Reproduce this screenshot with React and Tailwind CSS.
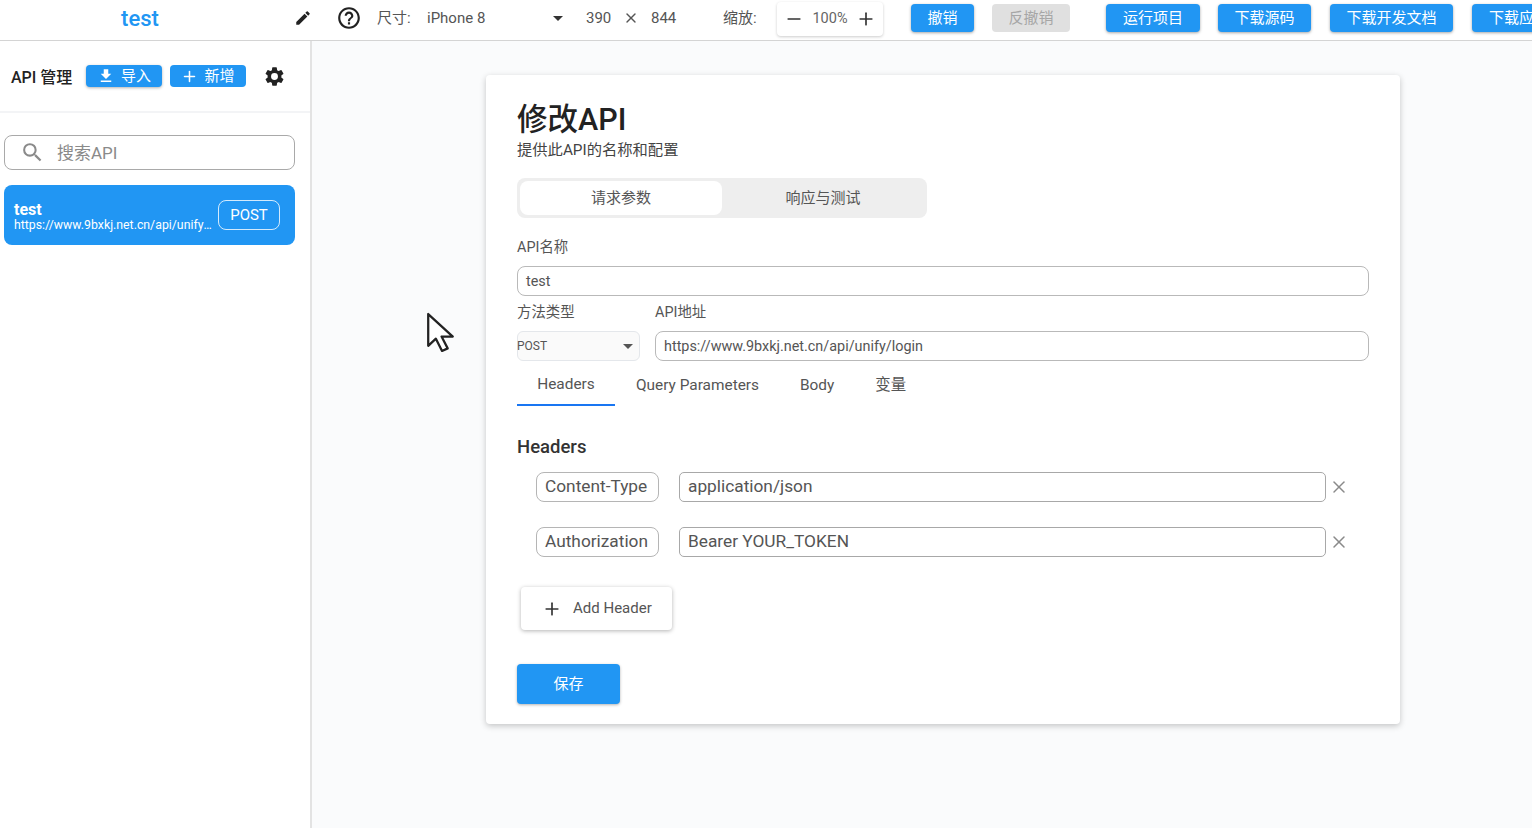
import { Plus, Minus, X } from 'lucide-react';

const font = 'font-["Roboto","Noto_Sans_CJK_SC",sans-serif]';
const headerBtn = 'h-7 rounded bg-[#2196f3] text-white text-[15px] shrink-0 shadow-[0_1px_3px_rgba(0,0,0,0.35)] flex items-center justify-center';

function MaterialIcon({ d, className }) {
  return (
    <svg viewBox="0 0 24 24" className={className} fill="currentColor">
      <path d={d} />
    </svg>
  );
}

const gearPath = 'M19.14 12.94c.04-.3.06-.61.06-.94s-.02-.64-.07-.94l2.03-1.58a.49.49 0 0 0 .12-.61l-1.92-3.32a.49.49 0 0 0-.59-.22l-2.39.96a7 7 0 0 0-1.62-.94l-.36-2.54a.48.48 0 0 0-.48-.41h-3.84a.48.48 0 0 0-.47.41l-.36 2.54c-.59.24-1.13.57-1.62.94l-2.39-.96a.48.48 0 0 0-.59.22L2.74 8.87a.48.48 0 0 0 .12.61l2.03 1.58c-.05.3-.09.63-.09.94s.02.64.07.94l-2.03 1.58a.49.49 0 0 0-.12.61l1.92 3.32c.12.22.37.29.59.22l2.39-.96c.5.38 1.03.7 1.62.94l.36 2.54c.05.24.24.41.48.41h3.84c.24 0 .44-.17.47-.41l.36-2.54c.59-.24 1.13-.56 1.62-.94l2.39.96c.22.08.47 0 .59-.22l1.92-3.32a.48.48 0 0 0-.12-.61l-2.01-1.58zM12 15.6a3.6 3.6 0 1 1 0-7.2 3.6 3.6 0 0 1 0 7.2z';
const editPath = 'M3 17.25V21h3.75L17.81 9.94l-3.75-3.75L3 17.25zM20.71 7.04a1 1 0 0 0 0-1.41l-2.34-2.34a1 1 0 0 0-1.41 0l-1.83 1.83 3.75 3.75 1.83-1.83z';
const helpPath = 'M11 18h2v-2h-2v2zm1-16C6.48 2 2 6.48 2 12s4.48 10 10 10 10-4.48 10-10S17.52 2 12 2zm0 18c-4.41 0-8-3.59-8-8s3.59-8 8-8 8 3.59 8 8-3.59 8-8 8zm0-14c-2.21 0-4 1.79-4 4h2c0-1.1.9-2 2-2s2 .9 2 2c0 2-3 1.75-3 5h2c0-2.25 3-2.5 3-5 0-2.21-1.79-4-4-4z';
const downloadPath = 'M19 9h-4V3H9v6H5l7 7 7-7zM5 18v2h14v-2H5z';
const searchPath = 'M15.5 14h-.79l-.28-.27A6.47 6.47 0 0 0 16 9.5 6.5 6.5 0 1 0 9.5 16c1.61 0 3.09-.59 4.23-1.57l.27.28v.79l5 4.99L20.49 19l-4.99-5zm-6 0C7.01 14 5 11.99 5 9.5S7.01 5 9.5 5 14 7.01 14 9.5 11.99 14 9.5 14z';

function Header() {
  return (
    <div className="h-[41px] shrink-0 flex items-center border-b border-[#d4d4d4] bg-white overflow-hidden pb-[4px] text-[#555]">
      <div className="w-[280px] shrink-0 text-center text-[22px] font-medium text-[#2196f3]">test</div>
      <MaterialIcon d={editPath} className="w-[18px] h-[18px] ml-[14px] shrink-0 text-[#222]" />
      <MaterialIcon d={helpPath} className="w-[26px] h-[26px] ml-[24px] shrink-0 text-[#222]" />
      <span className="ml-[15px] text-[15px] w-[50px] shrink-0">尺寸:</span>
      <span className="text-[15px] w-[126px] shrink-0">iPhone 8</span>
      <span className="w-0 h-0 border-x-[5px] border-x-transparent border-t-[5px] border-t-[#333] shrink-0 mt-[1px]" />
      <span className="ml-[23px] text-[15px] shrink-0 w-[38px]">390</span>
      <X className="w-[16px] h-[16px] shrink-0 -ml-[1px]" />
      <span className="ml-[12px] text-[15px] shrink-0 w-[72px]">844</span>
      <span className="text-[15px] shrink-0 w-[54px]">缩放:</span>
      <div className="w-[106px] h-[34px] shrink-0 mt-[1px] rounded shadow-[0_1px_3px_rgba(0,0,0,0.2)] bg-white flex items-center justify-center gap-[8px] text-[14.5px]">
        <Minus className="w-[20px] h-[20px] text-[#333]" />
        <span className="text-[#666]">100%</span>
        <Plus className="w-[20px] h-[20px] text-[#333]" />
      </div>
      <button className={`${headerBtn} ml-[28px] w-[63px]`}>撤销</button>
      <button className="h-7 rounded bg-[#e0e0e0] text-[#a6a6a6] text-[15px] shrink-0 ml-[18px] w-[78px]">反撤销</button>
      <button className={`${headerBtn} ml-[36px] w-[94px]`}>运行项目</button>
      <button className={`${headerBtn} ml-[18px] w-[93px]`}>下载源码</button>
      <button className={`${headerBtn} ml-[19px] w-[123px]`}>下载开发文档</button>
      <button className={`${headerBtn} ml-[19px] w-[94px]`}>下载应用</button>
    </div>
  );
}

function Sidebar() {
  return (
    <div className="w-[312px] shrink-0 border-r-2 border-[#e3e3e3] bg-white">
      <div className="h-[72px] flex items-center pl-[11px] border-b-2 border-[#f3f4f6]">
        <span className="text-base font-medium text-[#222] w-[75px] shrink-0 mt-[4px]">API 管理</span>
        <button className="w-[76px] h-[22px] rounded bg-[#2196f3] text-white text-[15px] flex items-center justify-center gap-[6px] shadow-[0_1px_3px_rgba(0,0,0,0.3)]">
          <MaterialIcon d={downloadPath} className="w-[18px] h-[18px]" />
          <span className="mt-[1px]">导入</span>
        </button>
        <button className="ml-2 w-[76px] h-[22px] rounded bg-[#2196f3] text-white text-[15px] flex items-center justify-center gap-[6px]">
          <Plus className="w-[17px] h-[17px]" strokeWidth={2.2} />
          <span className="mt-[1px]">新增</span>
        </button>
        <MaterialIcon d={gearPath} className="ml-[17px] w-[23px] h-[23px] text-[#222]" />
      </div>
      <div className="px-1 pt-[22px]">
        <div className="h-[35px] w-[291px] rounded-lg border border-[#a9a9a9] flex items-center pl-[15px] gap-[12px]">
          <MaterialIcon d={searchPath} className="w-[25px] h-[25px] text-[#8a8a8a]" />
          <span className="text-[17px] text-[#8a8a8a] mt-[3px]">搜索API</span>
        </div>
        <div className="mt-[15px] h-[60px] w-[291px] rounded-lg bg-[#2196f3] text-white flex items-center pl-[10px]">
          <div className="w-[200px] min-w-0 mt-[2px]">
            <div className="text-base leading-[17px] font-bold">test</div>
            <div className="text-[12.3px] leading-[14px] truncate">https://www.9bxkj.net.cn/api/unify/login</div>
          </div>
          <span className="ml-[4px] w-[62px] h-[30px] rounded-lg border border-white/80 flex items-center justify-center text-[15px]">POST</span>
        </div>
      </div>
    </div>
  );
}

function HeaderRow({ name, value, className }) {
  return (
    <div className={`flex items-center pl-[19px] ${className}`}>
      <div className="w-[123px] h-[30px] shrink-0 rounded-lg border border-[#b5b5b5] flex items-center pl-[8px] pb-[1px] text-[17.3px] text-[#555]">{name}</div>
      <div className="ml-[20px] flex-1 h-[30px] rounded-[5px] border border-[#a8a8a8] flex items-center pl-[8px] pb-[1px] text-[17.3px] text-[#555]">{value}</div>
      <X className="ml-[3px] mr-[20px] w-[20px] h-[20px] text-[#8a8a8a]" strokeWidth={1.8} />
    </div>
  );
}

function ApiCard() {
  return (
    <div className="w-[914px] h-[649px] mt-[34px] ml-[174px] shrink-0 rounded bg-white shadow-[0_2px_6px_rgba(0,0,0,0.22)] pl-[31px] pr-[31px] pt-[25px]">
      <h1 className="text-[30.5px] leading-[40px] font-medium text-[#222]">修改API</h1>
      <p className="text-[15.3px] leading-5 text-[#444]">提供此API的名称和配置</p>

      <div className="mt-[18px] w-[410px] h-[40px] rounded-lg bg-[#eeeeee] flex p-[3px] text-[15px] text-[#555]">
        <div className="w-[202px] rounded-lg bg-white flex items-center justify-center pt-[1px]">请求参数</div>
        <div className="flex-1 flex items-center justify-center pt-[1px]">响应与测试</div>
      </div>

      <div className="mt-[20px] text-[14.4px] leading-5 text-[#555]">API名称</div>
      <div className="mt-[8px] h-[30px] rounded-lg border border-[#b9b9b9] flex items-center pl-[8px] pt-[1px] text-[14.4px] text-[#555]">test</div>

      <div className="mt-[7px] flex gap-[15px]">
        <div className="w-[123px] shrink-0">
          <div className="text-[14.4px] leading-5 text-[#555]">方法类型</div>
          <div className="mt-[8px] h-[30px] rounded-md border border-[#e4e7eb] bg-[#fafafa] flex items-center justify-between pr-[6px] text-xs text-[#555]">
            <span className="-ml-[1px]">POST</span>
            <span className="w-0 h-0 border-x-[5px] border-x-transparent border-t-[5px] border-t-[#555]" />
          </div>
        </div>
        <div className="flex-1">
          <div className="text-[14.4px] leading-5 text-[#555]">API地址</div>
          <div className="mt-[8px] h-[30px] rounded-lg border border-[#b9b9b9] flex items-center pl-[8px] pt-[1px] text-[14.4px] text-[#555]">https://www.9bxkj.net.cn/api/unify/login</div>
        </div>
      </div>

      <div className="mt-[5px] h-[40px] flex text-[15.4px] text-[#555]">
        <div className="w-[98px] border-b-2 border-[#1976f2] flex items-center justify-center">Headers</div>
        <div className="ml-[21px] flex items-center pb-[1px]">Query Parameters</div>
        <div className="ml-[41px] flex items-center pb-[1px]">Body</div>
        <div className="ml-[41px] flex items-center pb-[1px]">变量</div>
      </div>

      <h2 className="mt-[29px] text-[18.5px] leading-6 font-medium text-[#333]">Headers</h2>
      <HeaderRow name="Content-Type" value="application/json" className="mt-[13px]" />
      <HeaderRow name="Authorization" value="Bearer YOUR_TOKEN" className="mt-[25px]" />

      <button className="mt-[30px] ml-[4px] w-[151px] h-[43px] rounded bg-white shadow-[0_1px_4px_rgba(0,0,0,0.3)] flex items-center pl-[21px] gap-[11px] text-[15px] text-[#555]">
        <Plus className="w-[20px] h-[20px] text-[#333]" />
        <span>Add Header</span>
      </button>

      <button className="mt-[34px] block w-[103px] h-[40px] rounded bg-[#2196f3] text-white text-[15px] shadow-[0_1px_3px_rgba(0,0,0,0.3)]">保存</button>
    </div>
  );
}

export default function App() {
  return (
    <div className={`relative h-[828px] w-[1532px] overflow-hidden flex flex-col ${font}`}>
      <Header />
      <div className="flex flex-1 min-h-0">
        <Sidebar />
        <div className="flex-1 bg-[#fafbfc]">
          <ApiCard />
        </div>
      </div>
      <svg viewBox="0 0 28 40" className="absolute left-[425px] top-[312px] w-[30px] h-[41px]">
        <path d="M2.5 2 L2.5 33 L10 26 L16 38 L21.5 35.5 L15.5 24 L26.5 24 Z" fill="#fff" stroke="#222" strokeWidth="2.2" strokeLinejoin="round" />
      </svg>
    </div>
  );
}
